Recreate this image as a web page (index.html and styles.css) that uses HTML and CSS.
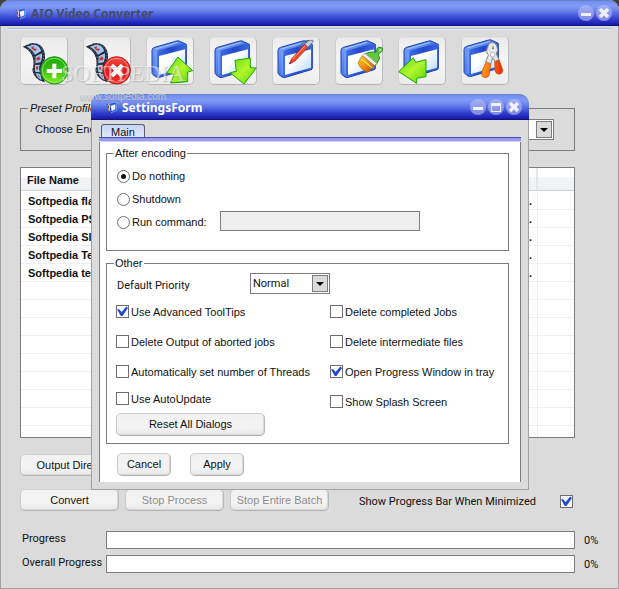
FILE: index.html
```html
<!DOCTYPE html>
<html lang="en">
<head>
<meta charset="utf-8">
<title>AIO Video Converter</title>
<link rel="stylesheet" href="styles.css">
</head>
<body>
<svg class="defs" aria-hidden="true">
  <defs>
    <linearGradient id="edge" x1="0" y1="0" x2="1" y2="1"><stop offset="0" stop-color="#7fa8f8"/><stop offset=".5" stop-color="#4a7ae8"/><stop offset="1" stop-color="#2450c8"/></linearGradient>
    <linearGradient id="band" x1="0" y1="0" x2="1" y2="0"><stop offset="0" stop-color="#3d6ce8"/><stop offset=".5" stop-color="#2348cc"/><stop offset="1" stop-color="#3a66e0"/></linearGradient>
    <linearGradient id="pane" x1="0" y1="0" x2="1" y2="1"><stop offset=".4" stop-color="#fff"/><stop offset="1" stop-color="#b4d8fc"/></linearGradient>
    <linearGradient id="green" x1="0" y1="0" x2="1" y2="1"><stop offset="0" stop-color="#58dc10"/><stop offset=".5" stop-color="#b4f62c"/><stop offset="1" stop-color="#4cd408"/></linearGradient>
    <linearGradient id="add" x1="0" y1="0" x2="0" y2="1"><stop offset="0" stop-color="#1fa80c"/><stop offset=".5" stop-color="#37bd10"/><stop offset="1" stop-color="#8cf020"/></linearGradient>
    <linearGradient id="del" x1="0" y1="0" x2="0" y2="1"><stop offset="0" stop-color="#f0504a"/><stop offset=".5" stop-color="#e61818"/><stop offset="1" stop-color="#f83028"/></linearGradient>
    <linearGradient id="orange" x1="0" y1="0" x2="1" y2="0"><stop offset="0" stop-color="#ff9a10"/><stop offset=".5" stop-color="#ff6a10"/><stop offset="1" stop-color="#e02c08"/></linearGradient>
    <linearGradient id="bristle" x1="0" y1="0" x2="1" y2="1"><stop offset="0" stop-color="#ffd818"/><stop offset=".5" stop-color="#f09010"/><stop offset="1" stop-color="#b04408"/></linearGradient>
  </defs>
  <symbol id="window" viewBox="0 0 144 144" overflow="visible">
    <path d="M18 40Q18 33 26 31L92 12Q98 10 104 14L121 22V94Q121 97 117 98L44 120Q36 123 30 120L21 113Q18 111 18 106Z" fill="url(#edge)" stroke="#1b3fae" stroke-width="3"/>
    <path d="M34 48Q34 41 41 39L112 20Q119 19 119 25V96L40 119Q34 120 34 114Z" fill="url(#band)"/>
    <path d="M28 36L96 16" fill="none" stroke="#a8c8ff" stroke-width="3"/>
    <path d="M30 46V112" fill="none" stroke="#7fa8fa" stroke-width="3"/>
    <path d="M39 57L117 37V92L39 114Z" fill="url(#pane)"/>
  </symbol>
  <symbol id="film" viewBox="0 0 144 144" overflow="visible">
    <path d="M8 29L32 19Q46 15 60 24Q76 36 75 62Q68 84 71 108L74 136L58 130Q40 119 37 99Q45 72 35 53Q26 36 8 29Z" fill="#252b3c"/>
    <path d="M20 29L38 23Q55 21 64 42L45 53Q36 37 20 29ZM47 58L66 49Q68 62 62 76L46 79ZM45 84L60 83Q55 92 60 106L45 104ZM47 108L61 111L65 130Q50 122 47 108Z" fill="#9bc9ee"/>
    <path d="M33 31L43 27L40 34L51 36L46 43L36 36ZM50 63L57 58L62 65L58 70L53 69L49 73ZM48 89L55 87L54 98L48 97ZM52 114L58 116L60 123Z" fill="#d03038"/>
    <path d="M23 23L47 19Q69 24 72 58Q65 83 70 132M23 36Q41 46 43 63Q43 82 40 99Q43 117 58 129" fill="none" stroke="#a9b0c4" stroke-width="2" stroke-dasharray="4 6"/>
  </symbol>
  <symbol id="mark" viewBox="0 0 33 33">
    <path d="M8 5L31 0V26L15 32L8 24Z" fill="#2457d0" stroke="#8cb8ff" stroke-width="2"/>
    <path d="M14 11L28 7V22L17 27Z" fill="#eaf4ff"/>
    <path d="M1 7Q12 3 14 14Q10 24 15 32L9 30Q5 23 7 17Q7 10 1 7Z" fill="#20242e"/>
    <path d="M5 8L10 10L11 15L9 22L11 28" fill="none" stroke="#f5c0c0" stroke-width="4"/>
  </symbol>
</svg>

<main class="window app">
  <header class="titlebar">
    <svg class="mark" aria-hidden="true"><use href="#mark"/></svg>
    <h1 class="title muted">AIO Video Converter</h1>
    <div class="controls">
      <button class="control" aria-label="Minimize"><svg viewBox="0 0 48 48"><path d="M9 24H39V33H9Z" fill="#eef1ff"/></svg></button>
      <button class="control" aria-label="Close"><svg viewBox="0 0 48 48"><path d="M12 12L36 36M36 12L12 36" stroke="#eef1ff" stroke-width="10"/></svg></button>
    </div>
  </header>
  <div class="rule"></div>

  <section class="content">
    <nav class="toolbar" aria-label="Tools">
      <button class="tool" aria-label="Add file"><svg viewBox="0 0 144 144"><use href="#film"/><circle cx="103" cy="100" r="41" fill="url(#add)" stroke="#169a10" stroke-width="3"/><circle cx="103" cy="100" r="36" fill="none" stroke="#8de36c" stroke-width="3"/><path d="M97 80H109V96H126V108H109V124H97V108H80V96H97Z" fill="#fff"/></svg></button>
      <button class="tool" aria-label="Remove file"><svg viewBox="0 0 144 144"><use href="#film"/><circle cx="101" cy="100" r="41" fill="url(#del)" stroke="#c01010" stroke-width="3"/><circle cx="101" cy="100" r="36" fill="none" stroke="#f58a80" stroke-width="3"/><path d="M86 85L118 117M118 85L86 117" stroke="#fff" stroke-width="13"/></svg></button>
      <button class="tool" aria-label="Move up"><svg viewBox="0 0 144 144"><use href="#window"/><path d="M96 60L140 101L125 105V134L74 138L84 112L62 108Z" fill="url(#green)" stroke="#18a808" stroke-width="3"/></svg></button>
      <button class="tool" aria-label="Move down"><svg viewBox="0 0 144 144"><use href="#window"/><path d="M78 70L124 63V92L142 93L105 141L63 107L82 103Z" fill="url(#green)" stroke="#18a808" stroke-width="3"/></svg></button>
      <button class="tool" aria-label="Edit"><svg viewBox="0 0 144 144"><use href="#window"/><path d="M52 81L58 66L98 22L108 31L68 73Z" fill="#f04828" stroke="#b82010" stroke-width="2"/><path d="M62 66L98 28" stroke="#ffa890" stroke-width="3"/><path d="M98 22L108 12L122 9L124 14L108 31Z" fill="#c8ccd6" stroke="#555c70" stroke-width="2"/><path d="M88 34L84 26L98 12L112 10" fill="none" stroke="#596078" stroke-width="3"/><path d="M52 81L55 74L60 77Z" fill="#333"/></svg></button>
      <button class="tool" aria-label="Clean"><svg viewBox="0 0 144 144"><use href="#window"/><path d="M88 50L110 45L124 46L126 34Q134 27 142 33Q146 43 136 47L130 52L134 64L124 82Z" fill="#62c840" stroke="#2a9420" stroke-width="3"/><path d="M82 56L90 49L125 79L119 87Z" fill="#f2f2f2" stroke="#999" stroke-width="2"/><path d="M82 56L119 87L98 106Q78 99 69 78Z" fill="url(#bristle)" stroke="#a85808" stroke-width="2"/><path d="M78 65L111 92" stroke="#ffe050" stroke-width="4"/><circle cx="136" cy="38" r="3" fill="#e8ffe0"/></svg></button>
      <button class="tool" aria-label="Load"><svg viewBox="0 0 144 144"><use href="#window"/><path d="M2 104L46 62L52 76L84 68V119L56 124V139Z" fill="url(#green)" stroke="#18a808" stroke-width="3"/></svg></button>
      <button class="tool" aria-label="Settings"><svg viewBox="0 0 144 144"><use href="#window" transform="translate(-9 -3)"/><path d="M76 72L90 78L84 116Q76 126 65 119Q60 113 63 104ZM101 72L114 67L125 98Q126 108 116 112Q105 112 102 102Z" fill="url(#orange)" stroke="#c84408" stroke-width="2"/><path d="M82 24Q88 15 97 17Q108 20 110 38L106 51L114 68L102 73L95 62L89 80L74 74L82 55L76 43Z" fill="#e8e8ea" stroke="#888" stroke-width="3"/><circle cx="95" cy="53" r="7" fill="#fff" stroke="#999" stroke-width="2"/><path d="M93 37L96 24L99 36Z" fill="#777"/></svg></button>
    </nav>

    <fieldset class="preset">
      <legend>Preset Profile</legend>
      <div class="preset-row">
        <label for="encoder">Choose Encoder</label>
        <span class="combo"><select id="encoder"><option></option></select></span>
      </div>
    </fieldset>

    <table class="jobs">
      <thead><tr><th>File Name</th><th></th><th class="last"></th></tr></thead>
      <tbody>
        <tr><td>Softpedia flash</td><td class="more">...</td><td></td></tr>
        <tr><td>Softpedia PSP</td><td class="more">...</td><td></td></tr>
        <tr><td>Softpedia Slide</td><td class="more">...</td><td></td></tr>
        <tr><td>Softpedia Test</td><td class="more">...</td><td></td></tr>
        <tr><td>Softpedia test</td><td class="more">...</td><td></td></tr>
        <tr><td></td><td></td><td></td></tr>
        <tr><td></td><td></td><td></td></tr>
        <tr><td></td><td></td><td></td></tr>
        <tr><td></td><td></td><td></td></tr>
        <tr><td></td><td></td><td></td></tr>
        <tr><td></td><td></td><td></td></tr>
        <tr><td></td><td></td><td></td></tr>
        <tr><td></td><td></td><td></td></tr>
        <tr class="rest"><td></td><td></td><td></td></tr>
      </tbody>
    </table>

    <div class="output"><button class="btn folder">Output Directory</button></div>

    <div class="actions">
      <button class="btn wide">Convert</button>
      <button class="btn wide" disabled>Stop Process</button>
      <button class="btn wide" disabled>Stop Entire Batch</button>
      <div class="minimized">
        <label for="minimized">Show Progress Bar When Minimized</label>
        <input type="checkbox" id="minimized" checked>
      </div>
    </div>
  </section>

  <section class="status">
    <label for="progress">Progress</label><progress id="progress" value="0" max="100"></progress><span class="percent">0%</span>
    <label for="overall">Overall Progress</label><progress id="overall" value="0" max="100"></progress><span class="percent">0%</span>
  </section>

  <div class="watermark" aria-hidden="true"><span class="brand">SOFTPEDIA</span></div>

  <section class="window dialog" role="dialog" aria-labelledby="dialog-title">
    <header class="titlebar">
      <svg class="mark" aria-hidden="true"><use href="#mark"/></svg>
      <h2 class="title" id="dialog-title">SettingsForm</h2>
      <div class="controls">
        <button class="control" aria-label="Minimize"><svg viewBox="0 0 48 48"><path d="M9 24H39V33H9Z" fill="#eef1ff"/></svg></button>
        <button class="control" aria-label="Maximize"><svg viewBox="0 0 48 48"><path d="M9 12H39V39H9ZM12 21V36H36V21Z" fill="#eef1ff" fill-rule="evenodd"/></svg></button>
        <button class="control" aria-label="Close"><svg viewBox="0 0 48 48"><path d="M12 12L36 36M36 12L12 36" stroke="#eef1ff" stroke-width="10"/></svg></button>
      </div>
    </header>
    <div class="dialog-body">
      <div class="tabs" role="tablist"><button class="tab" role="tab" aria-selected="true">Main</button></div>
      <div class="panel">
        <fieldset class="after">
          <legend>After encoding</legend>
          <label class="radio"><input type="radio" name="after" checked>Do nothing</label>
          <label class="radio"><input type="radio" name="after">Shutdown</label>
          <div class="command">
            <label class="radio"><input type="radio" name="after">Run command:</label>
            <input type="text" class="field" aria-label="Command" disabled>
          </div>
        </fieldset>

        <fieldset class="other">
          <legend>Other</legend>
          <div class="priority">
            <label for="priority">Default Priority</label>
            <span class="combo"><select id="priority"><option>Normal</option></select></span>
          </div>
          <div class="options">
            <div class="column">
              <label class="check"><input type="checkbox" checked><span>Use Advanced ToolTips</span></label>
              <label class="check"><input type="checkbox"><span>Delete Output of aborted jobs</span></label>
              <label class="check"><input type="checkbox"><span>Automatically set number of Threads</span></label>
              <div class="update">
                <label class="check"><input type="checkbox"><span>Use AutoUpdate</span></label>
                <button class="btn reset">Reset All Dialogs</button>
              </div>
            </div>
            <div class="column">
              <label class="check"><input type="checkbox"><span>Delete completed Jobs</span></label>
              <label class="check"><input type="checkbox"><span>Delete intermediate files</span></label>
              <label class="check"><input type="checkbox" checked><span>Open Progress Window in tray</span></label>
              <label class="check"><input type="checkbox"><span>Show Splash Screen</span></label>
            </div>
          </div>
        </fieldset>

        <div class="confirm">
          <button class="btn small">Cancel</button>
          <button class="btn small">Apply</button>
        </div>
      </div>
    </div>
  </section>

  <span class="site" aria-hidden="true">www.softpedia.com</span>
</main>
</body>
</html>
```
FILE: styles.css
```css
*,
*::before,
*::after {
  box-sizing: border-box;
}

body {
  margin: 0;
  background: #3f433f;
  color: #111;
  font: 11px/13px "Liberation Sans", Arial, sans-serif;
}

button,
input,
select {
  margin: 0;
  color: inherit;
  font: inherit;
}

fieldset {
  min-width: 0;
  margin: 0;
  border: 1px solid #7c7c7c;
}

legend {
  padding: 0 1px;
}

.defs {
  position: absolute;
  width: 0;
  height: 0;
}

/* Window frame */

.window {
  background: #dbdbdb;
  border-radius: 10px 10px 0 0;
  box-shadow: inset 0 0 0 1px #a2a2a2;
}

.app {
  position: relative;
  min-height: 100vh;
}

.titlebar {
  display: flex;
  align-items: center;
  height: 26px;
  padding: 0 7px 0 15px;
  border-top: 1px solid #6880c8;
  border-bottom: 1px solid #101080;
  border-radius: 10px 10px 0 0;
  background: linear-gradient(#6f8df0, #829bf8 20%, #6c86ee 38%, #4459dc 62%, #2a34c4 82%, #1818a4);
}

.mark {
  width: 11px;
  height: 11px;
}

.title {
  margin: 0 0 0 5px;
  padding-top: 2px;
  color: #fff;
  font: bold 12px/16px "Noto Sans", sans-serif;
}

.title.muted {
  color: #454c68;
}

.controls {
  display: flex;
  gap: 2px;
  margin-left: auto;
}

.control {
  width: 16px;
  height: 16px;
  padding: 0;
  border: 0;
  border-radius: 50%;
  background: linear-gradient(#a4b1f6, #7e88e2);
}

.control svg {
  display: block;
  width: 16px;
  height: 16px;
}

.rule {
  height: 2px;
  margin: 2px 8px 0;
  border-top: 1px solid #a8bce0;
  background: #e8eef8;
}

/* Main window */

.content {
  padding: 7px 44px 0 20px;
}

.toolbar {
  display: flex;
  gap: 15px;
}

.tool {
  flex: none;
  width: 48px;
  height: 48px;
  padding: 0;
  border: 1px solid #c6c6c6;
  border-color: #e2e2e2 #bcbcbc #b4b4b4 #cfcfcf;
  border-radius: 5px;
  background: linear-gradient(#ececec, #f5f5f5 50%, #ededed);
}

.tool svg {
  display: block;
  width: 48px;
  height: 48px;
  margin: -1px;
  overflow: visible;
}

.preset {
  margin-top: 17px;
  padding: 4px 20px 10px 7px;
}

.preset legend {
  padding: 0 2px;
  font-style: italic;
}

.preset-row {
  display: flex;
  align-items: center;
  gap: 40px;
  padding-left: 7px;
}

.preset-row .combo {
  flex: 1;
}

.combo {
  position: relative;
  display: block;
  height: 21px;
}

.combo select {
  appearance: none;
  width: 100%;
  height: 21px;
  padding: 0 20px 1px 2px;
  border: 1px solid #7c7c7c;
  border-radius: 0;
  background: #fff;
  font-family: Roboto, "Liberation Sans", sans-serif;
}

.combo::before {
  content: "";
  position: absolute;
  top: 2px;
  right: 2px;
  width: 16px;
  height: 17px;
  border: 1px solid #7c7c7c;
  background: #dbdbdb;
  pointer-events: none;
}

.combo::after {
  content: "";
  position: absolute;
  top: 9px;
  right: 6px;
  border: 4px solid transparent;
  border-top-color: #000;
  border-bottom: 0;
  pointer-events: none;
}

.jobs {
  width: 100%;
  margin-top: 16px;
  border: 1px solid #7c7c7c;
  border-spacing: 0;
  table-layout: fixed;
  background: #fff;
  font-weight: bold;
}

.jobs th {
  height: 23px;
  padding: 2px 6px 0;
  border-right: 2px solid #e4e6ea;
  border-bottom: 1px solid #d0d3d6;
  background: linear-gradient(#fff 40%, #f4f5f7 41%, #f0f1f3);
  text-align: left;
}

.jobs td {
  height: 18px;
  padding: 2px 5px 0 7px;
  border-right: 1px solid #efefef;
  border-bottom: 1px solid #efefef;
  white-space: nowrap;
}

.jobs tbody tr:first-child td {
  height: 19px;
  padding-top: 3px;
}

.jobs .rest td {
  height: 11px;
  border-bottom: 0;
}

.jobs th.last {
  width: 36px;
}

.jobs th:last-child,
.jobs td:last-child {
  border-right: 0;
}

.jobs .more {
  text-align: right;
}

.btn {
  height: 22px;
  padding: 0 2px;
  border: 1px solid #c2c2c2;
  border-color: #d0d0d0 #b8b8b8 #b2b2b2 #c8c8c8;
  border-radius: 5px;
  background: linear-gradient(#f1f1f1, #f4f4f4 60%, #e9e9e9);
  box-shadow: inset -1px -1px 1px #d8d8d8;
  white-space: nowrap;
}

.btn:disabled {
  color: #8c8c8c;
}

.wide {
  width: 99px;
}

.folder {
  width: 113px;
}

.output {
  display: flex;
  margin-top: 16px;
}

.actions {
  display: flex;
  align-items: center;
  gap: 6px;
  margin-top: 13px;
}

.minimized {
  display: flex;
  align-items: center;
  justify-content: space-between;
  flex: 1;
  padding: 3px 2px 0 24px;
  font-family: Roboto, "Liberation Sans", sans-serif;
}

.status {
  display: grid;
  grid-template-columns: 86px 1fr 44px;
  align-items: center;
  row-gap: 6px;
  margin-top: 20px;
  padding: 0 0 16px 20px;
  font-family: Roboto, "Liberation Sans", sans-serif;
}

.status label {
  padding: 0 0 3px 2px;
  white-space: nowrap;
}

.status progress {
  appearance: none;
  width: 100%;
  height: 18px;
  border: 1px solid #7c7c7c;
  background: #fff;
}

.status progress::-webkit-progress-bar {
  background: #fff;
}

.percent {
  padding-left: 9px;
}

/* Overlaid site mark */

.watermark {
  position: absolute;
  top: 62px;
  left: 61px;
  pointer-events: none;
}

.brand {
  color: rgba(255, 255, 255, 0.5);
  font: 23px/24px "Liberation Serif", serif;
  text-shadow: 1px 1px 1px rgba(120, 120, 120, 0.35);
}

.site {
  position: absolute;
  top: 90px;
  left: 80px;
  color: rgba(240, 240, 245, 0.6);
  font-size: 10px;
  text-shadow: 0 1px 1px rgba(110, 110, 120, 0.5);
  pointer-events: none;
}

/* Settings dialog */

.dialog {
  position: absolute;
  top: 94px;
  right: 90px;
  left: 91px;
}

.dialog-body {
  padding: 4px 8px 8px;
}

.tabs {
  display: flex;
  padding-left: 2px;
}

.tab {
  height: 13px;
  padding: 2px 9px 0;
  border: 1px solid #5a6070;
  border-bottom: 0;
  border-radius: 3px 3px 0 0;
  background: linear-gradient(#c4d4f6, #e0eafc);
  line-height: 11px;
}

.panel {
  position: relative;
  padding: 10px 11px 6px 6px;
  border: solid #7c7c7c;
  border-width: 0 1px;
  background: #fff;
}

.panel::before {
  content: "";
  position: absolute;
  top: 0;
  right: -1px;
  left: -1px;
  height: 5px;
  border-top: 1px solid #4646b4;
  border-bottom: 1px solid #d4d4ee;
  background: #9a9aee;
}

input[type="checkbox"],
input[type="radio"] {
  appearance: none;
  display: grid;
  flex: none;
  place-items: center;
  width: 13px;
  height: 13px;
  border: 1px solid #6e6e6e;
  background: #fff;
}

input[type="radio"] {
  border-radius: 50%;
}

input[type="radio"]:checked::before {
  content: "";
  width: 5px;
  height: 5px;
  border-radius: 50%;
  background: #111;
}

input[type="checkbox"]:checked::before {
  content: "";
  width: 11px;
  height: 11px;
  background: #2448d0;
  clip-path: polygon(0 30%, 20% 30%, 42% 55%, 84% 5%, 100% 18%, 50% 90%, 34% 90%);
}

.after {
  padding: 5px 10px 16px 7px;
}

.radio,
.check {
  display: flex;
  align-items: center;
  gap: 2px;
  white-space: nowrap;
}

.check {
  height: 13px;
}

.check span {
  padding-top: 2px;
}

.radio {
  height: 23px;
  padding-left: 3px;
}

.command {
  display: flex;
}

.command .radio {
  flex: 0 0 106px;
}

.field {
  flex: 0 1 200px;
  min-width: 0;
  height: 20px;
  border: 1px solid #7c7c7c;
  background: #efefef;
}

.other {
  margin-top: 6px;
  padding: 3px 10px 7px 7px;
}

.priority {
  display: grid;
  grid-template-columns: 133px 80px;
  align-items: center;
  padding-left: 3px;
}

.priority label {
  padding-top: 3px;
  font-family: Roboto, "Liberation Sans", sans-serif;
}

.options {
  display: grid;
  grid-template-columns: 214px 1fr;
  margin-top: 11px;
  padding-left: 2px;
}

.column {
  display: flex;
  flex-direction: column;
  gap: 17px;
}

.update {
  margin-top: -3px;
}

.reset {
  width: 149px;
  height: 23px;
  margin-top: 8px;
}

.confirm {
  display: flex;
  gap: 19px;
  margin-top: 9px;
  padding-left: 11px;
}

.small {
  width: 54px;
  height: 23px;
}
```
